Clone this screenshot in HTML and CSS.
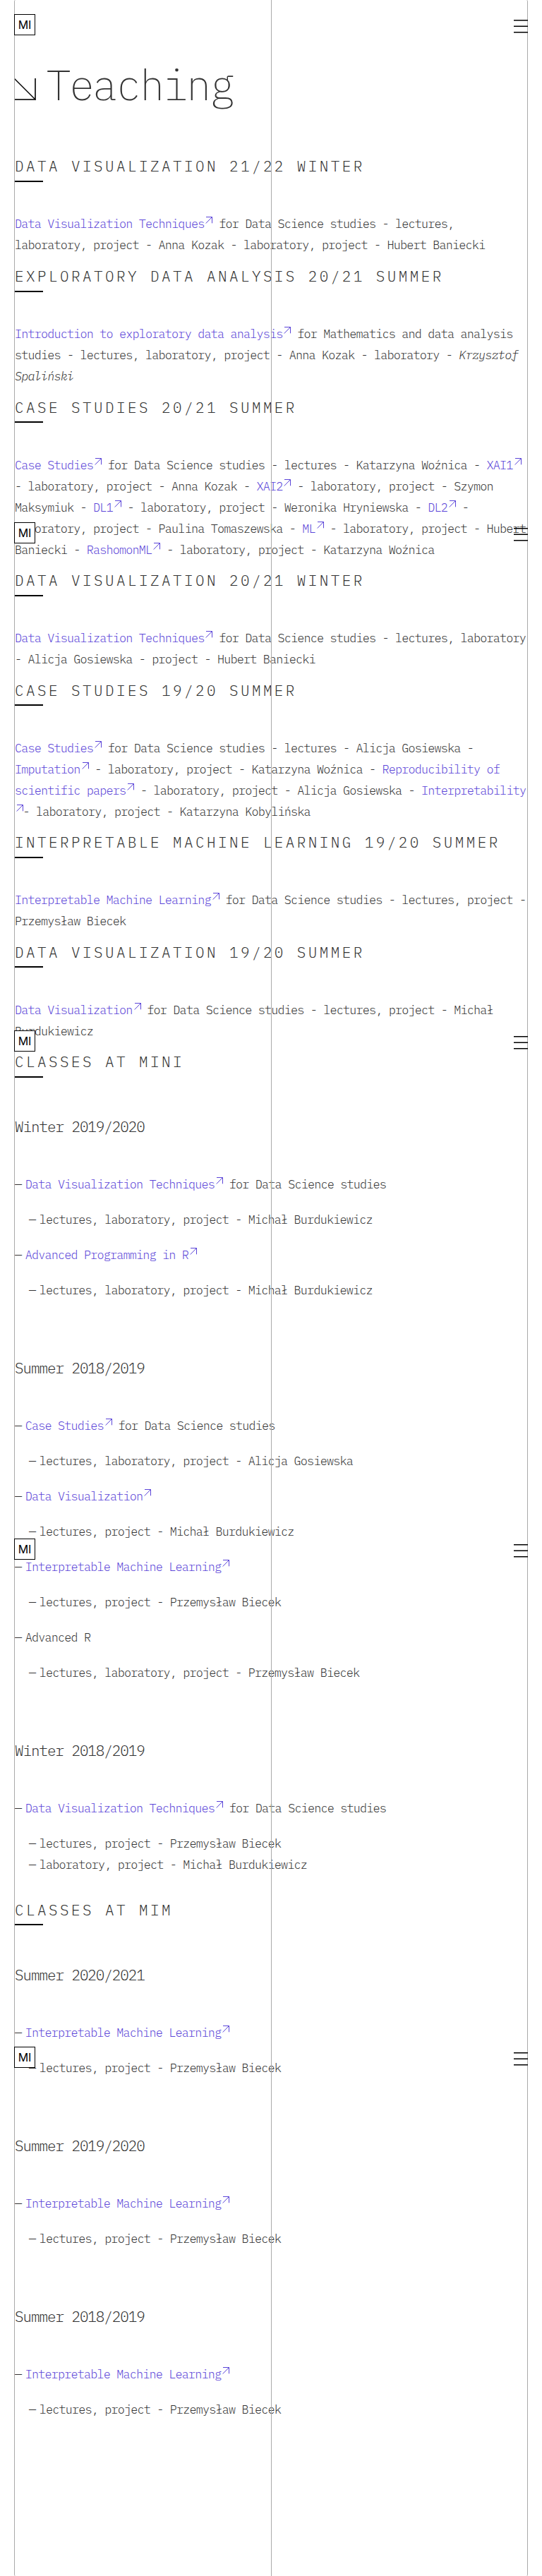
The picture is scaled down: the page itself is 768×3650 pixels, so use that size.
FILE: index.html
```
<!DOCTYPE html>
<html lang="en">
<head>
<meta charset="utf-8">
<title>Teaching</title>
<link rel="stylesheet" href="styles.css">
</head>
<body>
<svg class="defs" width="0" height="0" aria-hidden="true">
  <symbol id="ne" viewBox="0 0 10 10"><path d="M1 0.5H9.5V9.3M9.5 0.5L0.7 9.5" fill="none" stroke="currentColor" stroke-width="1"/></symbol>
  <symbol id="menu" viewBox="0 0 20 20"><path d="M0 0H20V1.5H0ZM0 8.5H20V10H0ZM0 17H20V18.5H0Z"/></symbol>
</svg>
<div class="page">
  <main class="content">
    <h1 class="title"><svg class="title-arrow" viewBox="0 0 31 31" width="31" height="31"><path d="M0 30H30V0" fill="none" stroke="#333" stroke-width="2"/><path d="M0 0L30 30" fill="none" stroke="#000" stroke-width="1.4"/></svg><span class="title-text">Teaching</span></h1>

    <h2>Data Visualization 21/22 Winter</h2>
    <p><a>Data Visualization Techniques<svg class="ne"><use href="#ne"/></svg></a> for Data Science studies - lectures, laboratory, project - Anna Kozak - laboratory, project - Hubert Baniecki</p>

    <h2>Exploratory Data Analysis 20/21 Summer</h2>
    <p><a>Introduction to exploratory data analysis<svg class="ne"><use href="#ne"/></svg></a> for Mathematics and data analysis studies - lectures, laboratory, project - Anna Kozak - laboratory - <em>Krzysztof Spaliński</em></p>

    <h2>Case Studies 20/21 Summer</h2>
    <p><a>Case Studies<svg class="ne"><use href="#ne"/></svg></a> for Data Science studies - lectures - Katarzyna Woźnica - <a>XAI1<svg class="ne"><use href="#ne"/></svg></a> - laboratory, project - Anna Kozak - <a>XAI2<svg class="ne"><use href="#ne"/></svg></a> - laboratory, project - Szymon Maksymiuk - <a>DL1<svg class="ne"><use href="#ne"/></svg></a> - laboratory, project - Weronika Hryniewska - <a>DL2<svg class="ne"><use href="#ne"/></svg></a> - laboratory, project - Paulina Tomaszewska - <a>ML<svg class="ne"><use href="#ne"/></svg></a> - laboratory, project - Hubert Baniecki - <a>RashomonML<svg class="ne"><use href="#ne"/></svg></a> - laboratory, project - Katarzyna Woźnica</p>

    <h2>Data Visualization 20/21 Winter</h2>
    <p><a>Data Visualization Techniques<svg class="ne"><use href="#ne"/></svg></a> for Data Science studies - lectures, laboratory - Alicja Gosiewska - project - Hubert Baniecki</p>

    <h2>Case Studies 19/20 Summer</h2>
    <p><a>Case Studies<svg class="ne"><use href="#ne"/></svg></a> for Data Science studies - lectures - Alicja Gosiewska - <a>Imputation<svg class="ne"><use href="#ne"/></svg></a> - laboratory, project - Katarzyna Woźnica - <a>Reproducibility of scientific papers<svg class="ne"><use href="#ne"/></svg></a> - laboratory, project - Alicja Gosiewska - <a>Interpretability<svg class="ne"><use href="#ne"/></svg></a>- laboratory, project - Katarzyna Kobylińska</p>

    <h2>Interpretable Machine Learning 19/20 Summer</h2>
    <p><a>Interpretable Machine Learning<svg class="ne"><use href="#ne"/></svg></a> for Data Science studies - lectures, project - Przemysław Biecek</p>

    <h2>Data Visualization 19/20 Summer</h2>
    <p><a>Data Visualization<svg class="ne"><use href="#ne"/></svg></a> for Data Science studies - lectures, project - Michał Burdukiewicz</p>

    <h2>Classes at MiNI</h2>
    <div class="term">
      <h3>Winter 2019/2020</h3>
      <ul>
        <li><a>Data Visualization Techniques<svg class="ne"><use href="#ne"/></svg></a> for Data Science studies
          <ul><li>lectures, laboratory, project - Michał Burdukiewicz</li></ul></li>
        <li><a>Advanced Programming in R<svg class="ne"><use href="#ne"/></svg></a>
          <ul><li>lectures, laboratory, project - Michał Burdukiewicz</li></ul></li>
      </ul>
    </div>
    <div class="term">
      <h3>Summer 2018/2019</h3>
      <ul>
        <li><a>Case Studies<svg class="ne"><use href="#ne"/></svg></a> for Data Science studies
          <ul><li>lectures, laboratory, project - Alicja Gosiewska</li></ul></li>
        <li><a>Data Visualization<svg class="ne"><use href="#ne"/></svg></a>
          <ul><li>lectures, project - Michał Burdukiewicz</li></ul></li>
        <li><a>Interpretable Machine Learning<svg class="ne"><use href="#ne"/></svg></a>
          <ul><li>lectures, project - Przemysław Biecek</li></ul></li>
        <li>Advanced R
          <ul><li>lectures, laboratory, project - Przemysław Biecek</li></ul></li>
      </ul>
    </div>
    <div class="term">
      <h3>Winter 2018/2019</h3>
      <ul>
        <li><a>Data Visualization Techniques<svg class="ne"><use href="#ne"/></svg></a> for Data Science studies
          <ul><li>lectures, project - Przemysław Biecek</li><li>laboratory, project - Michał Burdukiewicz</li></ul></li>
      </ul>
    </div>

    <h2>Classes at MIM</h2>
    <div class="term">
      <h3>Summer 2020/2021</h3>
      <ul>
        <li><a>Interpretable Machine Learning<svg class="ne"><use href="#ne"/></svg></a>
          <ul><li>lectures, project - Przemysław Biecek</li></ul></li>
      </ul>
    </div>
    <div class="term">
      <h3>Summer 2019/2020</h3>
      <ul>
        <li><a>Interpretable Machine Learning<svg class="ne"><use href="#ne"/></svg></a>
          <ul><li>lectures, project - Przemysław Biecek</li></ul></li>
      </ul>
    </div>
    <div class="term">
      <h3>Summer 2018/2019</h3>
      <ul>
        <li><a>Interpretable Machine Learning<svg class="ne"><use href="#ne"/></svg></a>
          <ul><li>lectures, project - Przemysław Biecek</li></ul></li>
      </ul>
    </div>
  </main>
  <div class="guides"><span class="guide-mid"></span></div>
  <div class="bars">
    <div class="bar"><span class="logo">MI</span><svg class="menu"><use href="#menu"/></svg></div>
    <div class="bar"><span class="logo">MI</span><svg class="menu"><use href="#menu"/></svg></div>
    <div class="bar"><span class="logo">MI</span><svg class="menu"><use href="#menu"/></svg></div>
    <div class="bar"><span class="logo">MI</span><svg class="menu"><use href="#menu"/></svg></div>
    <div class="bar"><span class="logo">MI</span><svg class="menu"><use href="#menu"/></svg></div>
  </div>
</div>
</body>
</html>
```
FILE: styles.css
```
* { box-sizing: border-box; }
body {
  margin: 0;
  background: #fff;
  color: #333;
  font: 300 16.84px/30px "IBM Plex Mono", "Liberation Mono", monospace;
  letter-spacing: -0.842px;
}
.defs { position: absolute; }
.page { position: relative; height: 3650px; overflow: hidden; }
.content { width: 727px; margin-left: 21px; }

.title {
  display: flex;
  align-items: flex-start;
  height: 206.9px;
  margin: 0 0 0 -1px;
  padding-top: 78px;
  font-weight: 200;
}
.title-arrow { display: block; margin-top: 33px; }
.title-text {
  margin-left: 14px;
  font-size: 60.2px;
  line-height: 83px;
  letter-spacing: -3.01px;
}

h2, h3 { margin: 0; font-weight: 300; }
h2 {
  padding-top: 15.6px;
  font-size: 20.9px;
  line-height: 28px;
  letter-spacing: 3.46px;
  text-transform: uppercase;
  white-space: nowrap;
}
h2::after {
  content: "";
  display: block;
  width: 40px;
  height: 2px;
  margin: 5.5px 0 44.47px;
  background: #000;
}
h3 { padding-top: 11.1px; font-size: 20.9px; line-height: 30px; letter-spacing: -1.05px; }
p { margin: 0; }
a { color: #5b45d8; }
.ne { width: 10px; height: 10px; margin: 0 -0.5px 0 2px; vertical-align: 6px; }

ul { margin: 0; padding: 0; list-style: none; }
.term > ul { margin-top: 50.9px; }
.term + .term { margin-top: 70px; }
li { padding-left: 14.7px; }
li::before {
  content: "—";
  float: left;
  width: 14.7px;
  margin-left: -14.7px;
}
li ul { margin: 20px 0 20px 5.3px; }

.guides {
  position: absolute;
  inset: 0 20px;
  border: 1px solid #aaa;
  border-width: 0 1px;
  border-radius: 2px;
  display: flex;
  justify-content: center;
}
.guide-mid { width: 1px; background: #aaa; }

.bars { position: absolute; inset: 20px 20px auto; }
.bar { display: flex; justify-content: space-between; height: 720px; }
.logo {
  width: 30px;
  height: 30px;
  border: 1px solid #000;
  background: #fff;
  color: #000;
  font: 400 16px/28px Inter, "Liberation Sans", sans-serif;
  letter-spacing: 0;
  text-align: center;
}
.menu { display: block; width: 20px; height: 20px; margin-top: 8px; }
```
